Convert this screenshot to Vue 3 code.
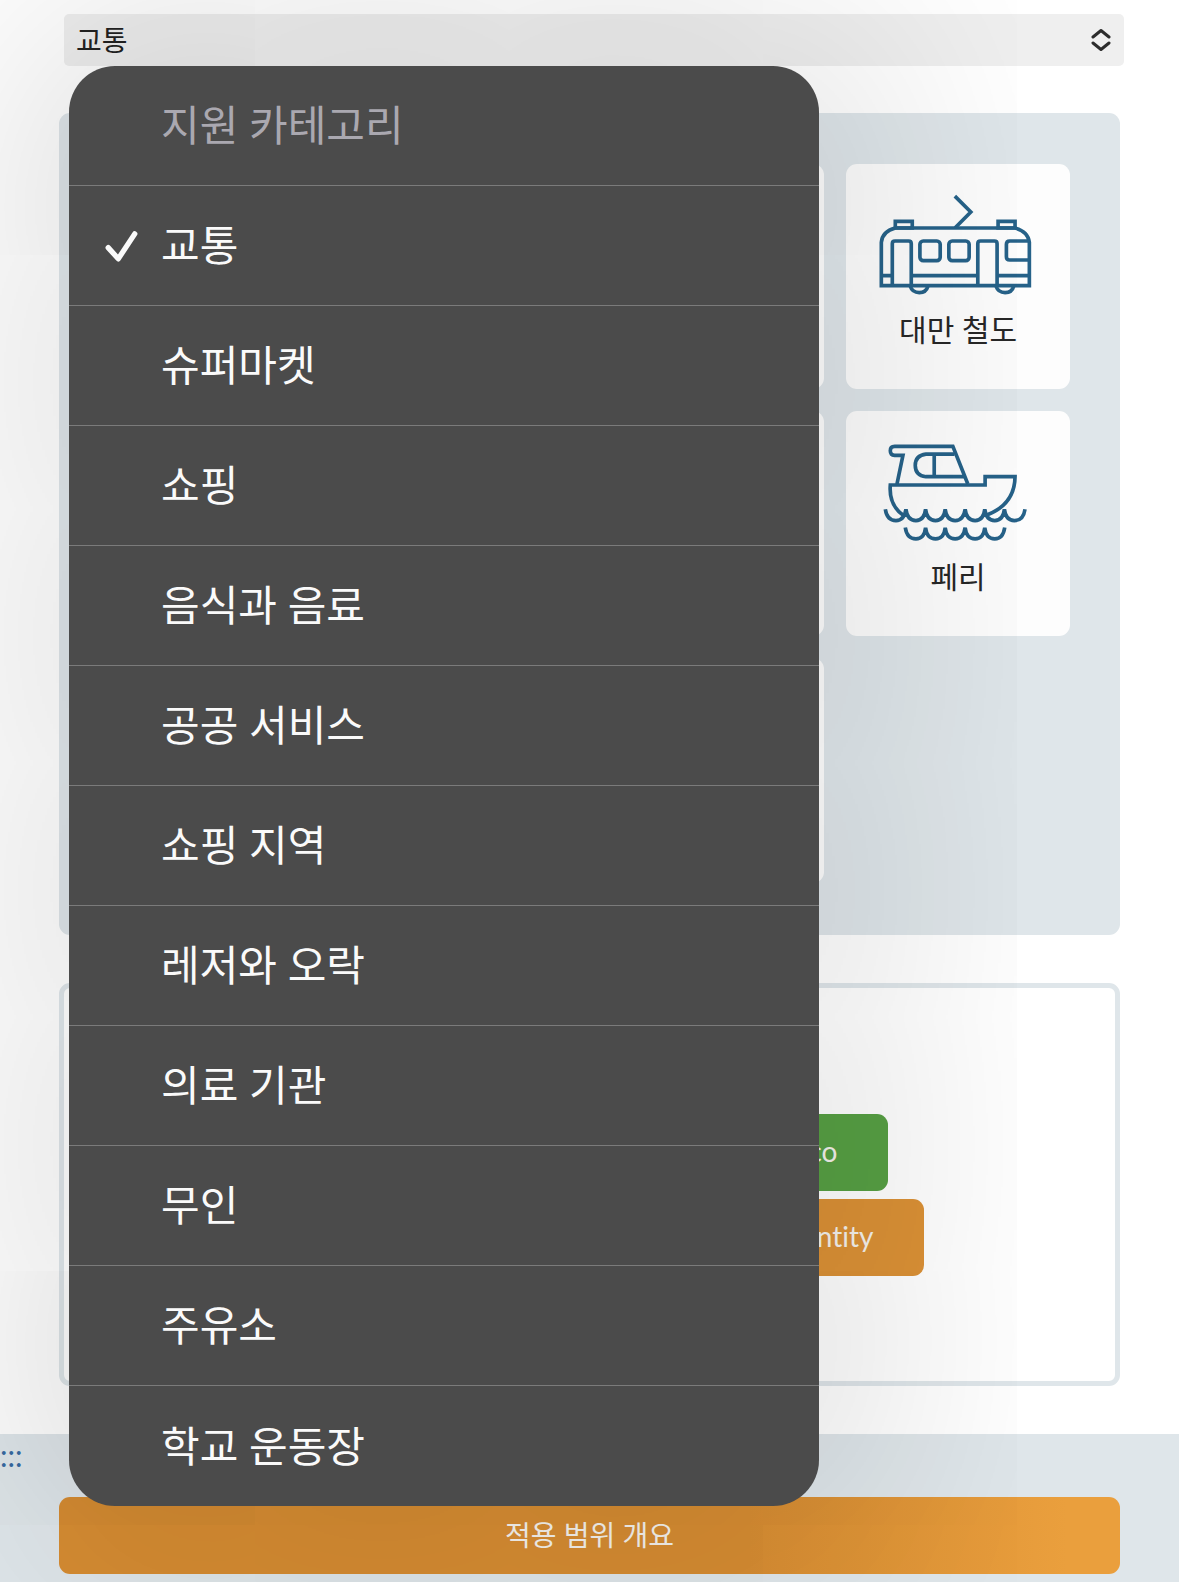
<script setup>
import { ref } from 'vue';

const categories = ['교통', '슈퍼마켓', '쇼핑', '음식과 음료', '공공 서비스', '쇼핑 지역', '레저와 오락', '의료 기관', '무인', '주유소', '학교 운동장'];
const selected = ref('교통');

const services = [
  {}, {}, {}, { icon: 'train', label: '대만 철도' },
  {}, {}, {}, { icon: 'ferry', label: '페리' },
  {}, {}, {}
];
</script>

<template>
  <div class="page">
    <div class="picker">
      <select v-model="selected" class="picker-select" aria-label="지원 카테고리">
        <option v-for="item in categories" :key="item" :value="item">{{ item }}</option>
      </select>
      <svg class="picker-arrows" viewBox="0 0 20 24" aria-hidden="true">
        <path d="M2 9 L10 2.5 L18 9 M2 15 L10 21.5 L18 15" />
      </svg>
      <div class="menu" role="listbox" aria-label="지원 카테고리">
        <div class="menu-row menu-title">지원 카테고리</div>
        <button
          v-for="item in categories"
          :key="item"
          type="button"
          role="option"
          class="menu-row"
          :aria-selected="item === selected"
          @click="selected = item"
        >
          <svg v-if="item === selected" class="tick" viewBox="0 0 32 32" aria-hidden="true">
            <path d="M3 18.500 L12.500 29 L28 5.500" />
          </svg>
          {{ item }}
        </button>
      </div>
    </div>

    <section class="services">
      <div v-for="(service, i) in services" :key="i" class="card">
        <svg v-if="service.icon === 'train'" class="card-icon" viewBox="115 100 478 306" aria-hidden="true">
          <path d="M343 109 L391 157 L344 204" />
          <path d="M164 205 V185 H215 V205 Z M473 205 V185 H524 V205 Z" />
          <path d="M122 378 V248 Q125 215 164 205 H524 Q563 215 567 248 V378 Z" />
          <path d="M122 348 H155 M212 348 H412 M470 348 H567" />
          <path d="M155 378 V252 Q155 244 163 244 H204 Q212 244 212 252 V378 M412 378 V252 Q412 244 420 244 H462 Q470 244 470 252 V378" />
          <rect x="238" y="244" width="61" height="59" rx="10" />
          <rect x="325" y="244" width="61" height="59" rx="10" />
          <path d="M567 244 H508 Q498 244 498 254 V291 Q498 301 508 301 H567" />
          <path d="M209 380 Q215 399 236 399 Q257 399 262 380 M467 380 Q473 399 494 399 Q515 399 520 380" />
        </svg>
        <svg v-if="service.icon === 'ferry'" class="card-icon" viewBox="115 105 478 306" aria-hidden="true">
          <path d="M169 237 L187 151 H162 Q149 150 149 137 Q149 124 162 124 H337 L382 237" />
          <path d="M342 147 H256 Q224 151 224 181 Q224 211 256 215 H373 M281 147 V215" />
          <path d="M187 330 Q144 300 149 240 H434 V215 H524 Q523 299 437 331" />
          <path d="M134 313 Q139 347 166 347 Q191 347 196 313 Q200 347 226 347 Q251 347 255 313 Q259 347 285 347 Q310 347 314 313 Q318 347 344 347 Q369 347 374 313 Q378 347 404 347 Q429 347 433 313 Q437 347 463 347 Q488 347 492 313 Q496 347 522 347 Q549 347 554 313" />
          <path d="M194 368 Q199 402 226 402 Q251 402 255 368 Q259 402 285 402 Q310 402 314 368 Q318 402 344 402 Q369 402 374 368 Q378 402 404 402 Q429 402 433 368 Q437 402 463 402 Q488 402 493 368" />
        </svg>
        <span v-if="service.label" class="card-label">{{ service.label }}</span>
      </div>
    </section>

    <section class="links">
      <button type="button" class="btn btn-green">co</button>
      <button type="button" class="btn btn-orange">ntity</button>
    </section>

    <footer class="footer">
      <a href="#" class="anchor">:::</a>
      <button type="button" class="btn btn-overview">적용 범위 개요</button>
    </footer>
  </div>
</template>

<style>
body { margin: 0; background: #fff; }
</style>

<style scoped>
* { box-sizing: border-box; }
.page { overflow: hidden; padding-top: 14px; font-family: Lato, 'Noto Sans CJK KR', sans-serif; color: #272727; }
button, select { font-family: inherit; }

.picker { position: relative; z-index: 1; margin: 0 55px 0 64px; }
.picker-select { display: block; width: 100%; height: 52px; padding: 0 12px; border: 0; border-radius: 5px; background: #efefef; color: #222; font-size: 28px; line-height: 52px; appearance: none; }
.picker-arrows { position: absolute; top: 14px; right: 13px; width: 20px; height: 24px; fill: none; stroke: #2c2c2c; stroke-width: 3; stroke-linecap: round; stroke-linejoin: round; }

.menu { position: absolute; top: 100%; left: 5px; width: 750px; max-width: 100%; border-radius: 46px; background: #4b4b4b; box-shadow: 0 0 320px 50px rgba(0, 0, 0, 0.14); }
.menu-row { position: relative; display: flex; align-items: center; width: 100%; height: 120px; padding: 0 92px 1px; border: 0; border-bottom: 1px solid #7b7b7b; background: none; color: #fafafa; font-size: 42px; line-height: 60px; text-align: left; cursor: pointer; }
.menu-row:last-child { border-bottom: 0; }
.menu-title { color: #aaa8b0; cursor: default; }
.tick { position: absolute; left: 36px; width: 34px; height: 34px; fill: none; stroke: #fafafa; stroke-width: 5; stroke-linecap: round; stroke-linejoin: round; }

.services { display: grid; grid-template-columns: repeat(4, 1fr); gap: 22px; margin: 47px 59px 48px; padding: 51px 50px 52px; border-radius: 11px; background: #dfe6ea; }
.card { display: flex; flex-direction: column; align-items: center; gap: 14px; min-height: 225px; padding-top: 29px; border-radius: 11px; background: #fdfdfd; }
.card-icon { width: 159px; height: 102px; fill: none; stroke: #266289; stroke-width: 11; }
.card-label { font-size: 30px; line-height: 40px; }

.links { display: flex; flex-direction: column; align-items: center; gap: 8px; margin: 0 59px 48px; padding: 126px 20px 105px; border: 5px solid #dfe6ea; border-radius: 11px; }
.btn { height: 77px; padding: 0 50px 4px; border: 0; border-radius: 11px; color: #f5f2ec; font-size: 28px; font-variant-ligatures: none; cursor: pointer; }
.btn-green { width: 596px; background: #57a044; text-align: right; }
.btn-orange { width: 668px; background: #db9136; text-align: right; }

.footer { display: flex; flex-direction: column; padding: 0 59px 10px; background: #dfe6ea; }
.anchor { height: 63px; margin-left: -59px; color: #366ba3; font-size: 30px; line-height: 42px; text-decoration: none; }
.btn-overview { width: 100%; background: linear-gradient(to right, #d68c32 0%, #d68c32 65%, #ea9f3d 95%); }
</style>
